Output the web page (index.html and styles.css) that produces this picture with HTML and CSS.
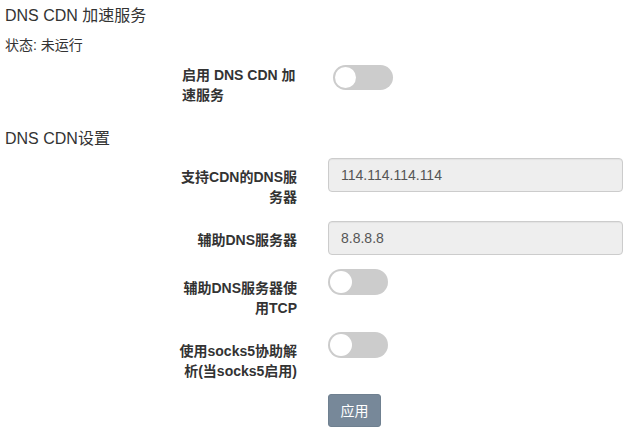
FILE: index.html
```html
<!DOCTYPE html>
<html lang="zh-CN">
<head>
<meta charset="utf-8">
<title>DNS CDN 加速服务</title>
<link rel="stylesheet" href="styles.css">
</head>
<body>
<div class="page">
  <h1 class="title">DNS CDN 加速服务</h1>
  <div class="status">状态: 未运行</div>

  <div class="enable-row">
    <label class="enable-label">启用 DNS CDN 加速服务</label>
    <span class="switch"><span class="knob"></span></span>
  </div>

  <h2 class="section-title">DNS CDN设置</h2>

  <div class="form">
    <div class="row">
      <label class="label">支持CDN的DNS服务器</label>
      <div class="control"><input class="input" type="text" value="114.114.114.114"></div>
    </div>
    <div class="row">
      <label class="label">辅助DNS服务器</label>
      <div class="control"><input class="input" type="text" value="8.8.8.8"></div>
    </div>
    <div class="row">
      <label class="label">辅助DNS服务器使用TCP</label>
      <div class="control"><span class="switch"><span class="knob"></span></span></div>
    </div>
    <div class="row">
      <label class="label">使用socks5协助解析(当socks5启用)</label>
      <div class="control"><span class="switch"><span class="knob"></span></span></div>
    </div>
    <div class="row actions">
      <div class="control"><button class="btn" type="button">应用</button></div>
    </div>
  </div>
</div>
</body>
</html>
```

FILE: styles.css
```css
* { box-sizing: border-box; }

html, body {
  margin: 0;
  padding: 0;
  background: #fff;
}

body {
  font-family: "Liberation Sans", "Noto Sans CJK SC", sans-serif;
  color: #333;
  font-size: 14px;
  line-height: 20px;
}

.page {
  padding: 6px 5px 0;
}

.title {
  margin: 0;
  font-size: 16px;
  line-height: 20px;
  font-weight: normal;
  color: #333;
}

.status {
  margin-top: 9px;
  font-size: 14px;
  line-height: 20px;
}

.enable-row {
  margin-top: 10px;
  display: flex;
  align-items: flex-start;
  padding-left: 177px;
}

.enable-label {
  width: 120px;
  font-weight: bold;
  text-align: left;
}

.enable-row .switch {
  margin-left: 31px;
  height: 25px;
}

.section-title {
  margin: 24px 0 0;
  font-size: 16px;
  line-height: 20px;
  font-weight: normal;
  color: #333;
}

.form {
  margin-top: 9px;
  padding-left: 172px;
}

.row {
  display: flex;
  align-items: flex-start;
  margin-bottom: 14px;
}

.label {
  width: 120px;
  padding-top: 9px;
  font-weight: bold;
  text-align: right;
}

.control {
  margin-left: 31px;
}

.actions .control {
  margin-left: 151px;
  margin-top: -1px;
}

.input {
  display: block;
  width: 295px;
  height: 34px;
  padding: 6px 12px;
  border: 1px solid #ccc;
  border-radius: 4px;
  background: #eee;
  color: #555;
  font-family: "Liberation Sans", "Noto Sans CJK SC", sans-serif;
  font-size: 14px;
  line-height: 20px;
  box-shadow: inset 0 1px 1px rgba(0, 0, 0, 0.05);
}

.switch {
  position: relative;
  display: inline-block;
  width: 60px;
  height: 26px;
  border-radius: 13px;
  background: #ccc;
}

.knob {
  position: absolute;
  left: 2px;
  top: 2px;
  bottom: 2px;
  aspect-ratio: 1 / 1;
  border-radius: 50%;
  background: #fff;
}

.btn {
  display: block;
  width: 53px;
  height: 33px;
  padding: 0;
  border: 1px solid #6f8090;
  border-radius: 3px;
  background: #778899;
  color: #fff;
  font-family: "Liberation Sans", "Noto Sans CJK SC", sans-serif;
  font-size: 14px;
  line-height: 20px;
}
```
